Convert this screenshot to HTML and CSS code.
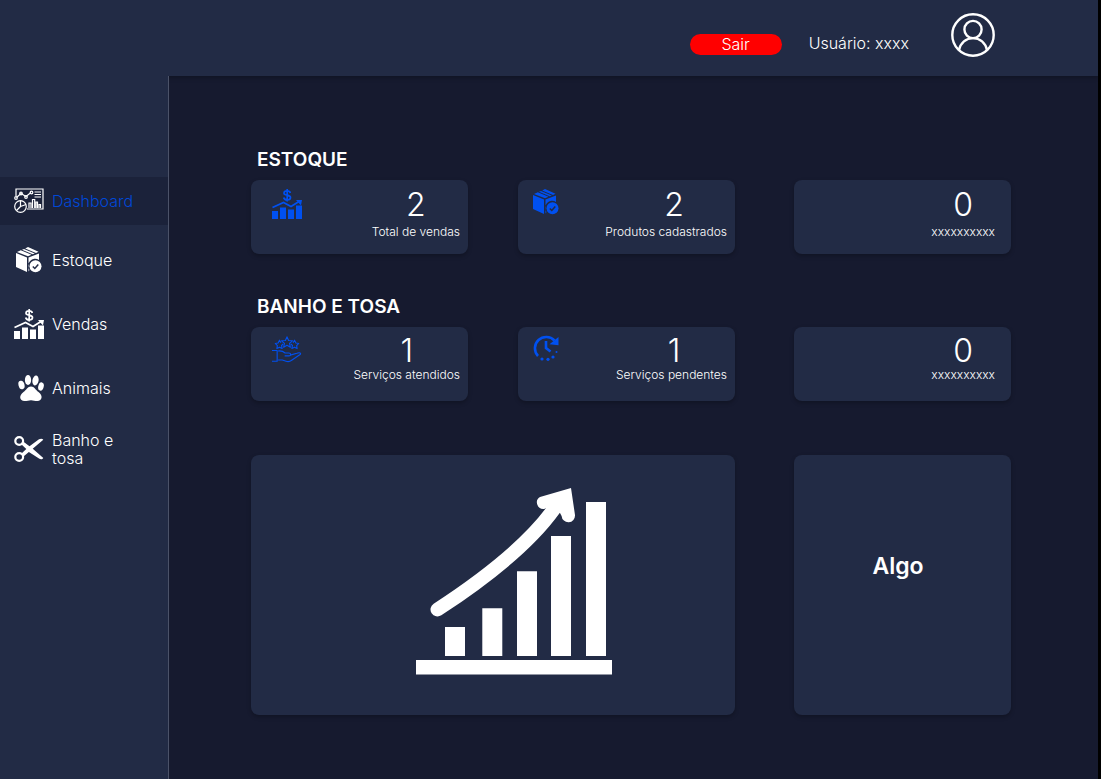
FILE: index.html
```html
<!DOCTYPE html>
<html lang="pt-BR">
<head>
<meta charset="utf-8">
<meta name="viewport" content="width=device-width, initial-scale=1">
<title>Dashboard</title>
<link rel="stylesheet" href="styles.css">
</head>
<body>
<svg class="sprite" aria-hidden="true">
  <symbol id="i-dash" viewBox="0 0 30 26">
    <g fill="none" stroke="currentColor" stroke-width="1.200">
      <path d="M2 8V1h27v20H13"/>
      <path d="M2.500 9.500L7 5.500L12 8.500L17 4.500" />
      <circle cx="2" cy="10" r="1.300"/><circle cx="7" cy="5.500" r="1.300"/><circle cx="12" cy="9" r="1.300"/><circle cx="17.500" cy="4.500" r="1.300"/>
      <path d="M20.500 4H27M20.500 6.500H27M20.500 9H27"/>
      <circle cx="6.500" cy="18.500" r="5.800"/>
      <path d="M6.500 12.500v6l5.500-2M6.500 18.500l-4 4"/>
      <path d="M15 20v-5h2v5M18.500 20v-8.500h2.200V20M22 20v-6h1.500v6M25 20v-3.500h1.500V20"/>
    </g>
  </symbol>
  <symbol id="i-box" viewBox="0 0 26 26">
    <path fill="currentColor" d="M0 6L11 10.500V25L0 20ZM12.500 10.500L23 6.500V13A7 7 0 0 0 13.500 23L12.500 24.500ZM1 5L4.800 3.300L15.500 7.800L12 9.300ZM6 2.800L8 2L18.800 6.400L16.700 7.300ZM9.200 1.500L12 0L22.500 4.800L20 5.900Z"/>
    <circle cx="19.500" cy="19.300" r="6" fill="currentColor"/>
    <path class="cut" d="M16.800 19.500l2 2 3.500-4"/>
  </symbol>
  <symbol id="i-sales" viewBox="0 0 30 30">
    <path fill="currentColor" d="M0 22h6v8H0zM8 18.500h6V30H8zM16 20.500h6V30h-6zM24 16.500h6V30h-6z"/>
    <path fill="none" stroke="currentColor" stroke-width="1.800" d="M.5 18.500L11.500 13.500L19 17.500L27 12.500"/>
    <path fill="currentColor" d="M24 11h6l-1 5.500z"/>
    <path fill="none" stroke="currentColor" stroke-width="1.700" d="M18.300 4C18 2.500 16.800 1.900 15.200 1.900C13.400 1.900 12 2.800 12 4.200C12 7 18.500 5.200 18.500 8.500C18.500 10 17 10.900 15.200 10.900C13.400 10.900 12 10 11.700 8.500M15.200 0v12.500"/>
  </symbol>
  <symbol id="i-paw" viewBox="0 0 30 26">
    <g fill="currentColor">
      <ellipse cx="7.500" cy="10" rx="3" ry="4.300" transform="rotate(-15 7.500 10)"/>
      <ellipse cx="14" cy="5" rx="3.100" ry="5"/>
      <ellipse cx="21.500" cy="5.500" rx="3.100" ry="5" transform="rotate(10 21.500 5.500)"/>
      <ellipse cx="27" cy="11.500" rx="2.700" ry="4.200" transform="rotate(15 27 11.500)"/>
      <path d="M17 11.500c3.500 0 4.500 3.500 7.500 5.500c5 3.500 3.500 9 -1 9c-3 0-4-.8-6.500-.8s-3.500.8-6.500.8c-5 0-6-5.500-1-9c3-2 4-5.500 7.500-5.500z"/>
    </g>
  </symbol>
  <symbol id="i-scissors" viewBox="0 0 30 26">
    <circle cx="5.200" cy="5" r="3.900" fill="none" stroke="currentColor" stroke-width="2.200"/>
    <circle cx="5.200" cy="21" r="3.900" fill="none" stroke="currentColor" stroke-width="2.200"/>
    <path fill="currentColor" d="M8.500 5L15.500 10.200L25 3.300C26.500 2.300 28.500 2.500 29.300 3.700L9.500 20.500L7 18L12.300 13L7 8ZM18.500 12.500L29.300 22C28.500 23.500 26.500 23.700 25 22.600L14.500 15.800Z"/>
  </symbol>
  <symbol id="i-service" viewBox="0 0 32 30">
    <g fill="none" stroke="currentColor" stroke-width="1.200" stroke-linejoin="round">
      <path d="M16 1l1.700 3.800 4.100.4-3.100 2.800.9 4.100L16 10l-3.600 2.100.9-4.100-3.100-2.800 4.100-.4z"/>
      <path d="M12 8.500l-1.800 1.700.6 3.200L8 12l-2.800 1.500.5-3.200L3.500 8l3-.5L8 4.500l1.500 2.800M20 8.500l1.800 1.700-.6 3.200L24 12l2.800 1.500-.5-3.200L28.500 8l-3-.5L24 4.500l-1.500 2.800"/>
      <path d="M0 15.500h5.500v11.500H0M6.500 16c4-.5 6 .8 7.500 2.200h4c2.500 0 2.500 3 0 3H13.500M19.500 20.500l7-2c3-1.200 5-.2 3.500 1.300l-9 6.200c-2 1.500-4 1.700-6 1l-4-1.300H6.500"/>
    </g>
  </symbol>
  <symbol id="i-clock" viewBox="0 0 26 26">
    <path fill="none" stroke="currentColor" stroke-width="2.600" d="M5 21A11 11 0 0 1 21.500 5.500M13 6v7l4.500 3.500"/>
    <path fill="currentColor" d="M25.500 2v8.200l-9-1z"/>
    <g fill="currentColor"><circle cx="9" cy="24" r="1.600"/><circle cx="15" cy="24.300" r="1.600"/><circle cx="20" cy="22" r="1.600"/><circle cx="23.500" cy="17" r="1"/></g>
  </symbol>
</svg>
<div class="app">
  <header class="topbar">
    <button class="logout" type="button">Sair</button>
    <span class="user">Usuário: xxxx</span>
    <svg class="avatar" viewBox="0 0 44 44" role="img" aria-label="Perfil">
      <g fill="none" stroke="currentColor" stroke-width="2.400">
        <circle cx="22" cy="22" r="20.700"/><circle cx="22" cy="16.500" r="8.600"/>
        <path d="M8 37C9.500 30 15 25.100 22 25.100S34.500 30 36 37"/>
      </g>
    </svg>
  </header>
  <div class="body">
    <nav class="sidebar">
      <a class="item active" href="#dashboard"><svg class="icon"><use href="#i-dash"/></svg>Dashboard</a>
      <a class="item" href="#estoque"><svg class="icon"><use href="#i-box"/></svg>Estoque</a>
      <a class="item" href="#vendas"><svg class="icon tall"><use href="#i-sales"/></svg>Vendas</a>
      <a class="item" href="#animais"><svg class="icon"><use href="#i-paw"/></svg>Animais</a>
      <a class="item two-line" href="#banho"><svg class="icon"><use href="#i-scissors"/></svg>Banho e tosa</a>
    </nav>
    <main class="content">
      <section class="section stock">
        <h2 class="title">ESTOQUE</h2>
        <div class="row">
          <article class="card"><svg class="mark wide"><use href="#i-sales"/></svg><div class="stat"><span class="num">2</span><span class="label">Total de vendas</span></div></article>
          <article class="card"><svg class="mark"><use href="#i-box"/></svg><div class="stat"><span class="num">2</span><span class="label">Produtos cadastrados</span></div></article>
          <article class="card"><div class="stat"><span class="num">0</span><span class="label">xxxxxxxxxx</span></div></article>
        </div>
      </section>
      <section class="section">
        <h2 class="title">BANHO E TOSA</h2>
        <div class="row">
          <article class="card"><svg class="mark wide"><use href="#i-service"/></svg><div class="stat"><span class="num">1</span><span class="label">Serviços atendidos</span></div></article>
          <article class="card"><svg class="mark"><use href="#i-clock"/></svg><div class="stat"><span class="num">1</span><span class="label">Serviços pendentes</span></div></article>
          <article class="card"><div class="stat"><span class="num">0</span><span class="label">xxxxxxxxxx</span></div></article>
        </div>
      </section>
      <div class="row panels">
        <section class="panel chart">
          <svg class="growth" viewBox="0 0 196 187" role="img" aria-label="Gráfico de crescimento">
            <path fill="currentColor" d="M0 172h196v14.500H0zM29 139h20v29H29zM66.300 120.300h20V168h-20zM101 83.300h20V168h-20zM135 48h20v120h-20zM170 14h20v154h-20z"/>
            <path fill="none" stroke="currentColor" stroke-width="14" stroke-linecap="round" d="M21.500 121.500Q105 67 138 21"/>
            <path fill="currentColor" d="M124 9L155 0L159 27a6.700 6.700 0 0 1-13.400 1L144 25L131 20L128 21A6.500 6.500 0 0 1 124 9Z"/>
          </svg>
        </section>
        <section class="panel misc"><h2 class="misc-title">Algo</h2></section>
      </div>
    </main>
  </div>
</div>
</body>
</html>
```

FILE: styles.css
```css
* { box-sizing: border-box; }

html { background: #000; }

body {
  margin: 0;
  font-family: Inter, "Liberation Sans", sans-serif;
  font-size: 16px;
  font-weight: 300;
  color: #fff;
}

.sprite { position: absolute; width: 0; height: 0; }

.app {
  display: flex;
  flex-direction: column;
  min-height: 100vh;
  margin-right: 3px;
  background: #161a2f;
}

.topbar {
  display: flex;
  justify-content: flex-end;
  align-items: flex-end;
  padding: 13px 103px 19px 16px;
  background: #222b45;
  box-shadow: 0 2px 4px rgba(0, 0, 0, 0.25);
}

.logout {
  width: 92px;
  height: 21px;
  margin: 0 27px 2px 0;
  padding: 0 0 2px;
  border: 0;
  border-radius: 11px;
  background: #f00;
  color: #fff;
  font: inherit;
  line-height: 18px;
}

.user { margin: 0 42px 4px 0; line-height: 20px; }

.avatar { width: 44px; height: 44px; }

.body { display: flex; flex: 1; }

.sidebar {
  position: relative;
  flex: 0 0 169px;
  padding-top: 101px;
  background: #222b45;
  border-right: 1px solid #4b5268;
}

.item {
  display: flex;
  align-items: center;
  gap: 8px;
  height: 64px;
  padding: 0 48px 0 14px;
  color: #fff;
  line-height: 18px;
  text-decoration: none;
}

.item.active {
  height: 48px;
  margin-bottom: 3px;
  padding-right: 16px;
  background: #1b223a;
  color: #0048d8;
}

.item.two-line { height: 58px; }

.icon { flex: none; width: 30px; height: 26px; color: #fff; }
.icon.tall { height: 30px; }

.cut { fill: none; stroke: #222b45; stroke-width: 1.5; }

.content { flex: 1; padding: 72px 87px 64px 82px; }

.section { margin-bottom: 41px; }

.title {
  margin: 0 0 8px;
  padding-left: 6px;
  font-size: 19px;
  font-weight: 600;
  line-height: 24px;
}

.row { display: grid; grid-template-columns: 217fr 50px 217fr 59px 217fr; }

.card, .panel {
  border-radius: 8px;
  background: #222b45;
  box-shadow: 0 2px 4px rgba(0, 0, 0, 0.25);
}

.card {
  display: flex;
  justify-content: space-between;
  min-height: 74px;
  padding: 8px 8px 8px 15px;
}

.card:nth-child(1) { padding-left: 21px; }
.card:nth-child(2) { grid-column: 3; }
.card:nth-child(3) { grid-column: 5; padding-right: 16px; }

.mark { width: 26px; height: 26px; color: #0050f0; }
.mark.wide { width: 30px; height: 30px; }
.stock .mark { margin-top: 1px; }

.stat {
  display: flex;
  flex-direction: column;
  margin-left: auto;
  text-align: center;
}

.stock .stat { gap: 3px; padding-top: 1px; }

.num { font-size: 32px; line-height: 32px; }
.card:nth-child(2) .num { align-self: flex-end; width: 106px; }

.label { font-size: 12px; line-height: 16px; }

.panels { margin-top: 54px; }

.panel {
  display: flex;
  align-items: center;
  justify-content: center;
  min-height: 260px;
}

.chart { grid-column: 1 / 4; padding: 0 0 8px 42px; }
.growth { width: 196px; height: 187px; }

.misc { grid-column: 5; padding: 0 9px 38px 0; }
.misc-title { margin: 0; font-size: 23px; font-weight: 600; line-height: 28px; }
```
